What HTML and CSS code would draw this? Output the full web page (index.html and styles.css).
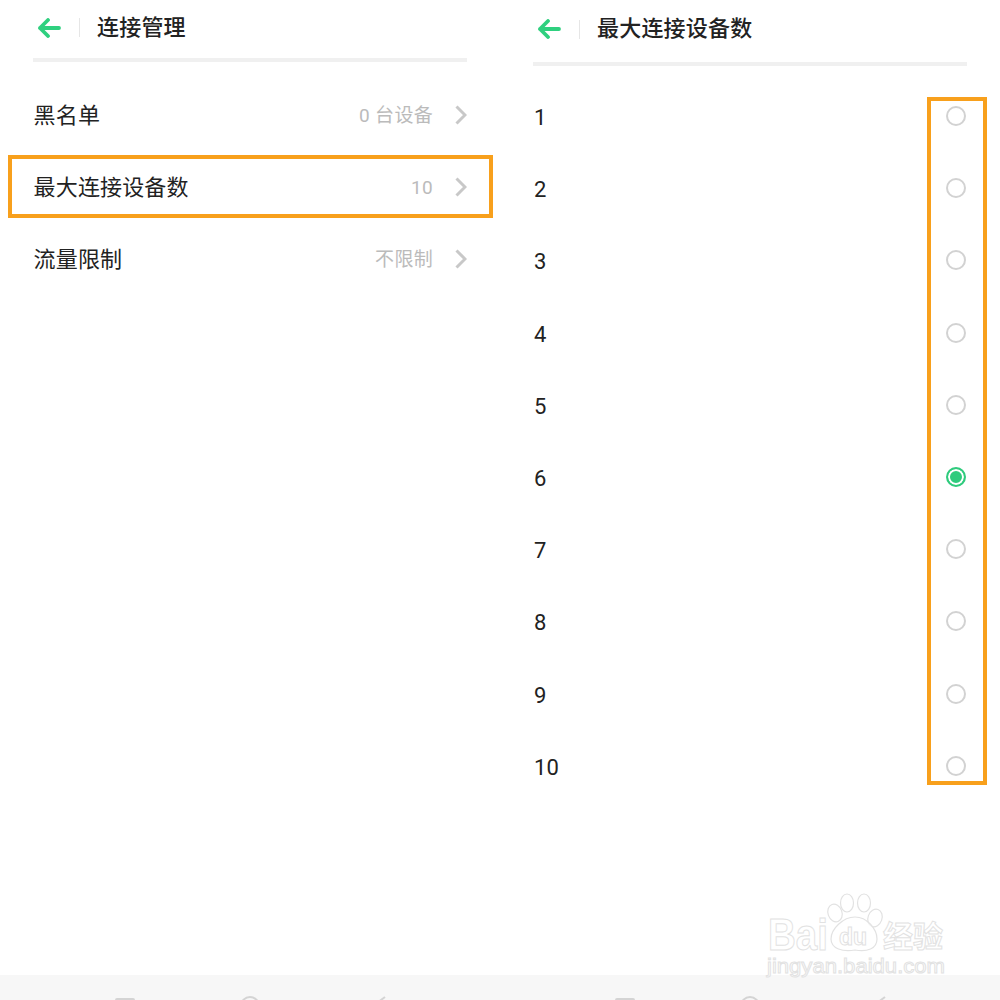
FILE: index.html
```html
<!DOCTYPE html>
<html lang="zh-CN">
<head>
  <meta charset="UTF-8" />
  <title>连接管理</title>
  <link rel="stylesheet" href="styles.css">
</head>
<body>

<div class="screen">
  <!-- Connection settings -->
  <div class="panel">
    <div class="content">
      <div class="header header-left">
        <svg class="back" viewBox="0 0 24 20"><path d="M22 10H3M11 2L3 10L11 18" /></svg>
        <span class="divider"></span>
        <span class="title">连接管理</span>
      </div>
      <div class="list list-left">
        <div class="row">
          <span class="label">黑名单</span>
          <span class="value">0 台设备</span>
          <svg class="chevron" viewBox="0 0 12 20"><path d="M1.5 1.5L10 10L1.5 18.5" /></svg>
        </div>
        <div class="row">
          <span class="label">最大连接设备数</span>
          <span class="value">10</span>
          <svg class="chevron" viewBox="0 0 12 20"><path d="M1.5 1.5L10 10L1.5 18.5" /></svg>
        </div>
        <div class="row">
          <span class="label">流量限制</span>
          <span class="value">不限制</span>
          <svg class="chevron" viewBox="0 0 12 20"><path d="M1.5 1.5L10 10L1.5 18.5" /></svg>
        </div>
      </div>
    </div>
    <div class="navbar">
      <span class="nav-square"></span>
      <span class="nav-circle"></span>
      <svg class="nav-back" viewBox="0 0 12 8"><path d="M10 1L2 7" /></svg>
    </div>
    <div class="highlight highlight-row"></div>
  </div>

  <!-- Max connected devices -->
  <div class="panel">
    <div class="content">
      <div class="header header-right">
        <svg class="back" viewBox="0 0 24 20"><path d="M22 10H3M11 2L3 10L11 18" /></svg>
        <span class="divider"></span>
        <span class="title">最大连接设备数</span>
      </div>
      <div class="list list-right">
        <div class="row option"><span class="label">1</span><span class="radio"></span></div>
        <div class="row option"><span class="label">2</span><span class="radio"></span></div>
        <div class="row option"><span class="label">3</span><span class="radio"></span></div>
        <div class="row option"><span class="label">4</span><span class="radio"></span></div>
        <div class="row option"><span class="label">5</span><span class="radio"></span></div>
        <div class="row option"><span class="label">6</span><span class="radio checked"></span></div>
        <div class="row option"><span class="label">7</span><span class="radio"></span></div>
        <div class="row option"><span class="label">8</span><span class="radio"></span></div>
        <div class="row option"><span class="label">9</span><span class="radio"></span></div>
        <div class="row option"><span class="label">10</span><span class="radio"></span></div>
      </div>
    </div>
    <div class="navbar">
      <span class="nav-square"></span>
      <span class="nav-circle"></span>
      <svg class="nav-back" viewBox="0 0 12 8"><path d="M10 1L2 7" /></svg>
    </div>
    <div class="highlight highlight-radios"></div>
  </div>

  <!-- Watermark -->
  <svg class="watermark" viewBox="0 0 190 100">
    <text class="wm-text wm-brand" x="8" y="65" textLength="60" lengthAdjust="spacingAndGlyphs">Bai</text>
    <ellipse cx="75" cy="28" rx="7" ry="9" transform="rotate(-20 75 28)" />
    <ellipse cx="87" cy="18" rx="6.5" ry="9" />
    <ellipse cx="104" cy="18" rx="6.5" ry="9" />
    <ellipse cx="115" cy="33" rx="7" ry="9" transform="rotate(20 115 33)" />
    <path d="M95 32C107 32 117 44 117 54C117 64 107 67 95 65C83 67 71 64 71 54C71 44 83 32 95 32Z" />
    <text class="wm-text wm-du" x="79" y="60">du</text>
    <text class="wm-text wm-cn" x="123" y="62">经验</text>
    <text class="wm-text wm-url" x="7" y="88" textLength="178" lengthAdjust="spacingAndGlyphs">jingyan.baidu.com</text>
  </svg>
</div>

</body>
</html>
```

FILE: styles.css
```css
html, body {
  margin: 0;
  padding: 0;
  overflow: hidden;
}

body {
  font-family: Roboto, "Noto Sans CJK SC", sans-serif;
  background: #fff;
  color: #222;
}

.screen {
  position: relative;
  display: flex;
  width: 1000px;
  height: 1000px;
  overflow: hidden;
}

.panel {
  position: relative;
  display: flex;
  flex-direction: column;
  width: 500px;
  height: 100%;
}

.content {
  flex: 1;
  padding: 0 33px;
}

.header {
  display: flex;
  align-items: center;
  padding-left: 4px;
  border-bottom: 4px solid #f0f0f0;
}

.header-left {
  height: 55px;
  padding-bottom: 3px;
}

.header-right {
  height: 58px;
  padding-bottom: 4px;
}

.back {
  width: 24px;
  height: 20px;
  fill: none;
  stroke: #2fd07f;
  stroke-width: 3.8;
  stroke-linecap: round;
  stroke-linejoin: round;
}

.divider {
  width: 1px;
  height: 19px;
  margin: 0 17px 0 18px;
  background: #e6e6e6;
}

.title {
  font-size: 22px;
  font-weight: 500;
  letter-spacing: 0.2px;
  line-height: 30px;
}

.list-left {
  margin-top: 17px;
}

.list-right {
  margin-top: 15px;
}

.row {
  display: flex;
  align-items: center;
  height: 72px;
}

.option {
  height: 72.2px;
  padding-right: 1.5px;
}

.label {
  flex: 1;
  padding-top: 2px;
  padding-left: 0.6px;
  font-size: 22px;
  letter-spacing: 0.15px;
  line-height: 30px;
}

.option .label {
  padding-left: 1px;
}

.value {
  padding-top: 2px;
  font-size: 19px;
  letter-spacing: 0.3px;
  color: #bbb;
  line-height: 26px;
}

.chevron {
  width: 12px;
  height: 20px;
  margin-left: 22px;
  fill: none;
  stroke: #c8c8c8;
  stroke-width: 3;
}

.radio {
  box-sizing: border-box;
  width: 20px;
  height: 20px;
  margin-bottom: 2px;
  border: 2px solid #d2d2d2;
  border-radius: 50%;
  background: #fff;
}

.radio.checked {
  border-color: #2fcb7d;
  background: #2fcb7d;
  box-shadow: inset 0 0 0 2px #fff;
}

.navbar {
  display: flex;
  align-items: flex-start;
  height: 25px;
  padding: 21px 0 0 115px;
  box-sizing: border-box;
  overflow: hidden;
  background: #f7f7f7;
}

.nav-square {
  flex: none;
  box-sizing: border-box;
  width: 20px;
  height: 20px;
  margin-top: 2px;
  border: 2px solid #d4d4d4;
  border-radius: 2px;
}

.nav-circle {
  flex: none;
  box-sizing: border-box;
  width: 20px;
  height: 20px;
  margin-left: 105px;
  border: 2px solid #d4d4d4;
  border-radius: 50%;
}

.nav-back {
  flex: none;
  width: 12px;
  height: 8px;
  margin-left: 115px;
  fill: none;
  stroke: #d4d4d4;
  stroke-width: 2;
}

.highlight {
  position: absolute;
  box-sizing: border-box;
  border: 4px solid #f8a01c;
}

.highlight-row {
  left: 8px;
  top: 155px;
  width: 485px;
  height: 63px;
}

.highlight-radios {
  left: 427px;
  top: 97px;
  width: 60px;
  height: 688px;
}

.watermark {
  position: absolute;
  left: 760px;
  top: 885px;
  width: 190px;
  height: 100px;
  fill: #fff;
  fill-opacity: 0.5;
  stroke: #e2e2e2;
  stroke-width: 1.2;
}

.wm-text {
  stroke-width: 1;
}

.wm-brand {
  font-family: "Liberation Sans", sans-serif;
  font-size: 44px;
  font-weight: 700;
}

.wm-du {
  font-family: "Liberation Sans", sans-serif;
  font-size: 23px;
  font-weight: 700;
}

.wm-cn {
  font-family: "Noto Sans CJK SC", sans-serif;
  font-size: 30px;
  font-weight: 700;
}

.wm-url {
  font-family: "Liberation Sans", sans-serif;
  font-size: 21px;
}
```
